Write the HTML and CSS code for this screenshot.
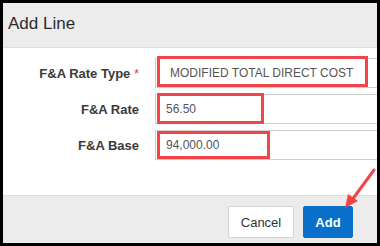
FILE: index.html
```html
<!DOCTYPE html>
<html lang="en">
<head>
  <meta charset="UTF-8">
  <title>Add Line</title>
  <link rel="stylesheet" href="styles.css">
</head>
<body>
  <div class="frame">
    <div class="dialog">
      <div class="dialog-header">Add Line</div>

      <div class="dialog-body">
        <div class="form-row">
          <label>F&amp;A Rate Type <span class="req">*</span></label>
          <div class="field field-select">MODIFIED TOTAL DIRECT COST</div>
        </div>
        <div class="form-row">
          <label>F&amp;A Rate</label>
          <div class="field">56.50</div>
        </div>
        <div class="form-row">
          <label>F&amp;A Base</label>
          <div class="field">94,000.00</div>
        </div>

        <!-- annotation boxes -->
        <div class="mark mark-type"></div>
        <div class="mark mark-rate"></div>
        <div class="mark mark-base"></div>
      </div>

      <div class="dialog-footer">
        <button class="btn btn-cancel">Cancel</button>
        <button class="btn btn-add">Add</button>
      </div>
    </div>

    <svg class="arrow" width="40" height="46" viewBox="0 0 40 46">
      <line x1="34" y1="4" x2="12" y2="34" stroke="#f2454a" stroke-width="3" stroke-linecap="round"/>
      <polygon points="5,42 8,28 18,35" fill="#f2454a"/>
    </svg>
  </div>
</body>
</html>
```

FILE: styles.css
```css
body {
  margin: 0;
  background: #000;
  font-family: 'Liberation Sans', Arial, sans-serif;
}

.frame {
  position: relative;
  width: 380px;
  height: 246px;
  padding: 3px;
  box-sizing: border-box;
  overflow: hidden;
}

.dialog {
  width: 374px;
  height: 240px;
  background: #fff;
  display: flex;
  flex-direction: column;
  overflow: hidden;
}

.dialog-header {
  height: 44px;
  background: #ececec;
  border-bottom: 1px solid #dddddd;
  color: #2b2b2b;
  font-size: 17px;
  line-height: 42px;
  padding-left: 5px;
}

.dialog-body {
  position: relative;
  height: 147px;
  padding-top: 10px;
  box-sizing: border-box;
  display: flex;
  flex-direction: column;
  gap: 6px;
}

.form-row {
  display: flex;
  align-items: center;
  gap: 16px;
}

.form-row label {
  width: 136px;
  text-align: right;
  font-size: 13px;
  font-weight: bold;
  color: #3a3a3a;
}

.req {
  color: #e0403a;
  font-weight: normal;
}

.field {
  flex: 1;
  height: 30px;
  line-height: 29px;
  border: 1px solid #cfcfcf;
  border-right: none;
  box-sizing: border-box;
  padding-left: 10px;
  font-size: 12px;
  color: #555;
}

.field-select {
  padding-left: 14px;
}

.mark {
  position: absolute;
  border: 3px solid #f2454a;
  box-sizing: border-box;
}

.mark-type { left: 154px; top: 8px; width: 211px; height: 31px; }
.mark-rate { left: 154px; top: 45px; width: 107px; height: 31px; }
.mark-base { left: 154px; top: 83px; width: 113px; height: 28px; }

.dialog-footer {
  flex: 1;
  background: #ececec;
  border-top: 1px solid #dddddd;
  display: flex;
  justify-content: flex-end;
  align-items: flex-start;
  gap: 9px;
  padding: 10px 24px 0 0;
}

.btn {
  height: 32px;
  font-family: 'Liberation Sans', Arial, sans-serif;
  font-size: 13px;
  border-radius: 2px;
  padding: 0;
}

.btn-cancel {
  width: 66px;
  background: #fff;
  border: 1px solid #d4d4d4;
  color: #333;
}

.btn-add {
  width: 50px;
  background: #0a6fc9;
  border: 1px solid #0a6fc9;
  color: #fff;
  font-weight: bold;
}

.arrow {
  position: absolute;
  left: 340px;
  top: 166px;
}
```
